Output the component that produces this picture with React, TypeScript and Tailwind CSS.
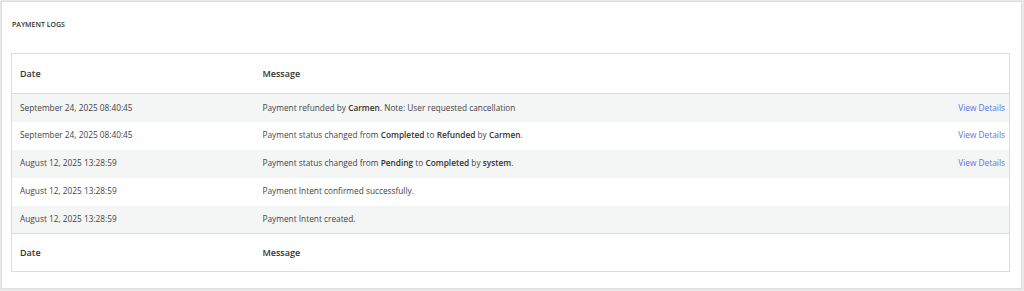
import React from "react";

type Log = {
  date: string;
  message: React.ReactNode;
  details?: boolean;
};

const logs: Log[] = [
  {
    date: "September 24, 2025 08:40:45",
    message: (
      <>
        Payment refunded by <b className="font-semibold text-[#333]">Carmen</b>. Note: User requested cancellation
      </>
    ),
    details: true,
  },
  {
    date: "September 24, 2025 08:40:45",
    message: (
      <>
        Payment status changed from <b className="font-semibold text-[#333]">Completed</b> to{" "}
        <b className="font-semibold text-[#333]">Refunded</b> by <b className="font-semibold text-[#333]">Carmen</b>.
      </>
    ),
    details: true,
  },
  {
    date: "August 12, 2025 13:28:59",
    message: (
      <>
        Payment status changed from <b className="font-semibold text-[#333]">Pending</b> to{" "}
        <b className="font-semibold text-[#333]">Completed</b> by <b className="font-semibold text-[#333]">system</b>.
      </>
    ),
    details: true,
  },
  { date: "August 12, 2025 13:28:59", message: "Payment Intent confirmed successfully." },
  { date: "August 12, 2025 13:28:59", message: "Payment Intent created." },
];

const App = () => {
  return (
    <div className="w-[1024px] h-[291px] bg-[#e8e8e8] pt-px pl-px pr-[2px] pb-[2px] font-['Open_Sans',sans-serif]">
      <div className="h-full bg-white border border-[#dedede] pl-[9px] pr-[11px] pt-[18px]">
        <h2 className="text-[7px] leading-[10px] font-semibold uppercase text-[#333] pl-px">Payment Logs</h2>

        <table className="mt-[23px] w-full border border-[#dcdcdc] border-collapse text-[8.3px] text-[#444]">
          <thead>
            <tr className="h-[40px] border-b border-[#dcdcdc]">
              <th className="w-[251px] text-left pl-[8px] font-semibold text-[9px] text-[#333]">Date</th>
              <th className="text-left font-semibold text-[9px] text-[#333]">Message</th>
              <th></th>
            </tr>
          </thead>
          <tbody>
            {logs.map((log, i) => (
              <tr key={i} className={i % 2 === 0 ? "h-[28px] bg-[#f4f5f5]" : "h-[28px] bg-white"}>
                <td className="pl-[8px]">{log.date}</td>
                <td>{log.message}</td>
                <td className="text-right pr-[4px] whitespace-nowrap">
                  {log.details && <a className="text-[#5f72e4] cursor-pointer">View Details</a>}
                </td>
              </tr>
            ))}
          </tbody>
          <tfoot>
            <tr className="h-[38px] border-t border-[#dcdcdc]">
              <th className="text-left pl-[8px] font-semibold text-[9px] text-[#333]">Date</th>
              <th className="text-left font-semibold text-[9px] text-[#333]">Message</th>
              <th></th>
            </tr>
          </tfoot>
        </table>
      </div>
    </div>
  );
};

export default App;
